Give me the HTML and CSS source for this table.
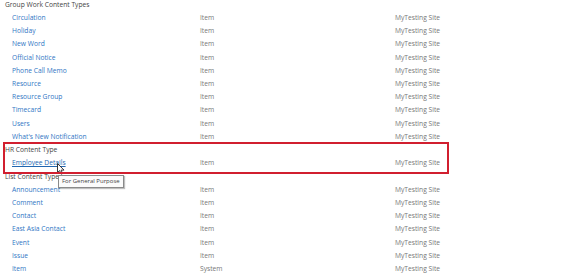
FILE: index.html
```html
<!DOCTYPE html>
<html>
<head>
<meta charset="utf-8">
<link rel="stylesheet" href="styles.css">
</head>
<body>
<div class="list">
  <div class="group-title">Group Work Content Types</div>
  <div class="row"><a class="name">Circulation</a><span class="type">Item</span><span class="src">MyTesting Site</span></div>
  <div class="row"><a class="name">Holiday</a><span class="type">Item</span><span class="src">MyTesting Site</span></div>
  <div class="row"><a class="name">New Word</a><span class="type">Item</span><span class="src">MyTesting Site</span></div>
  <div class="row"><a class="name">Official Notice</a><span class="type">Item</span><span class="src">MyTesting Site</span></div>
  <div class="row"><a class="name">Phone Call Memo</a><span class="type">Item</span><span class="src">MyTesting Site</span></div>
  <div class="row"><a class="name">Resource</a><span class="type">Item</span><span class="src">MyTesting Site</span></div>
  <div class="row"><a class="name">Resource Group</a><span class="type">Item</span><span class="src">MyTesting Site</span></div>
  <div class="row"><a class="name">Timecard</a><span class="type">Item</span><span class="src">MyTesting Site</span></div>
  <div class="row"><a class="name">Users</a><span class="type">Item</span><span class="src">MyTesting Site</span></div>
  <div class="row"><a class="name">What's New Notification</a><span class="type">Item</span><span class="src">MyTesting Site</span></div>
  <div class="hr-group">
    <div class="group-title">HR Content Type</div>
    <div class="row"><a class="name hover">Employee Details</a><span class="type">Item</span><span class="src">MyTesting Site</span></div>
    <svg class="cursor" width="8" height="12" viewBox="0 0 8 12"><path d="M0.5 0.5 L0.5 9.5 L2.6 7.6 L4.2 11.2 L5.6 10.6 L4.1 7.1 L7 7.1 Z" fill="#fff" stroke="#222" stroke-width="0.9" stroke-linejoin="round"/></svg>
    <div class="tooltip">For General Purpose</div>
  </div>
  <div class="group-title">List Content Types</div>
  <div class="row"><a class="name">Announcement</a><span class="type">Item</span><span class="src">MyTesting Site</span></div>
  <div class="row"><a class="name">Comment</a><span class="type">Item</span><span class="src">MyTesting Site</span></div>
  <div class="row"><a class="name">Contact</a><span class="type">Item</span><span class="src">MyTesting Site</span></div>
  <div class="row"><a class="name">East Asia Contact</a><span class="type">Item</span><span class="src">MyTesting Site</span></div>
  <div class="row"><a class="name">Event</a><span class="type">Item</span><span class="src">MyTesting Site</span></div>
  <div class="row"><a class="name">Issue</a><span class="type">Item</span><span class="src">MyTesting Site</span></div>
  <div class="row"><a class="name">Item</a><span class="type">System</span><span class="src">MyTesting Site</span></div>
</div>
</body>
</html>
```
FILE: styles.css
```css
html, body {
  margin: 0;
  padding: 0;
  background: #fff;
  overflow: hidden;
}
body {
  font-family: "Open Sans", "Noto Sans", sans-serif;
  font-size: 6.7px;
  color: #555;
}
.list {
  margin-top: -2.3px;
  padding-left: 5px;
}
.group-title {
  line-height: 13.23px;
  height: 13.23px;
  color: #444;
}
.row {
  display: grid;
  grid-template-columns: 188px 195px 1fr;
  padding-left: 7px;
  line-height: 13.23px;
  height: 13.23px;
  white-space: nowrap;
}
.name {
  color: #2f76c4;
  text-decoration: none;
}
.name.hover {
  color: #2266b0;
  text-decoration: underline;
}
.type, .src {
  color: #777;
}
.hr-group {
  position: relative;
}
.hr-group::after {
  content: "";
  position: absolute;
  top: -1px;
  left: -2px;
  width: 442px;
  bottom: -4px;
  border: 2px solid #d11f2f;
  pointer-events: none;
}
.cursor {
  position: absolute;
  left: 52px;
  top: 20px;
}
.tooltip {
  position: absolute;
  left: 53px;
  top: 32px;
  padding: 0 3px;
  line-height: 11px;
  height: 11px;
  font-size: 6px;
  color: #444;
  background: #fbfbfb;
  border: 1px solid #8a8a8a;
  box-shadow: 1px 1px 1px rgba(0,0,0,0.25);
  white-space: nowrap;
  z-index: 2;
}
```
